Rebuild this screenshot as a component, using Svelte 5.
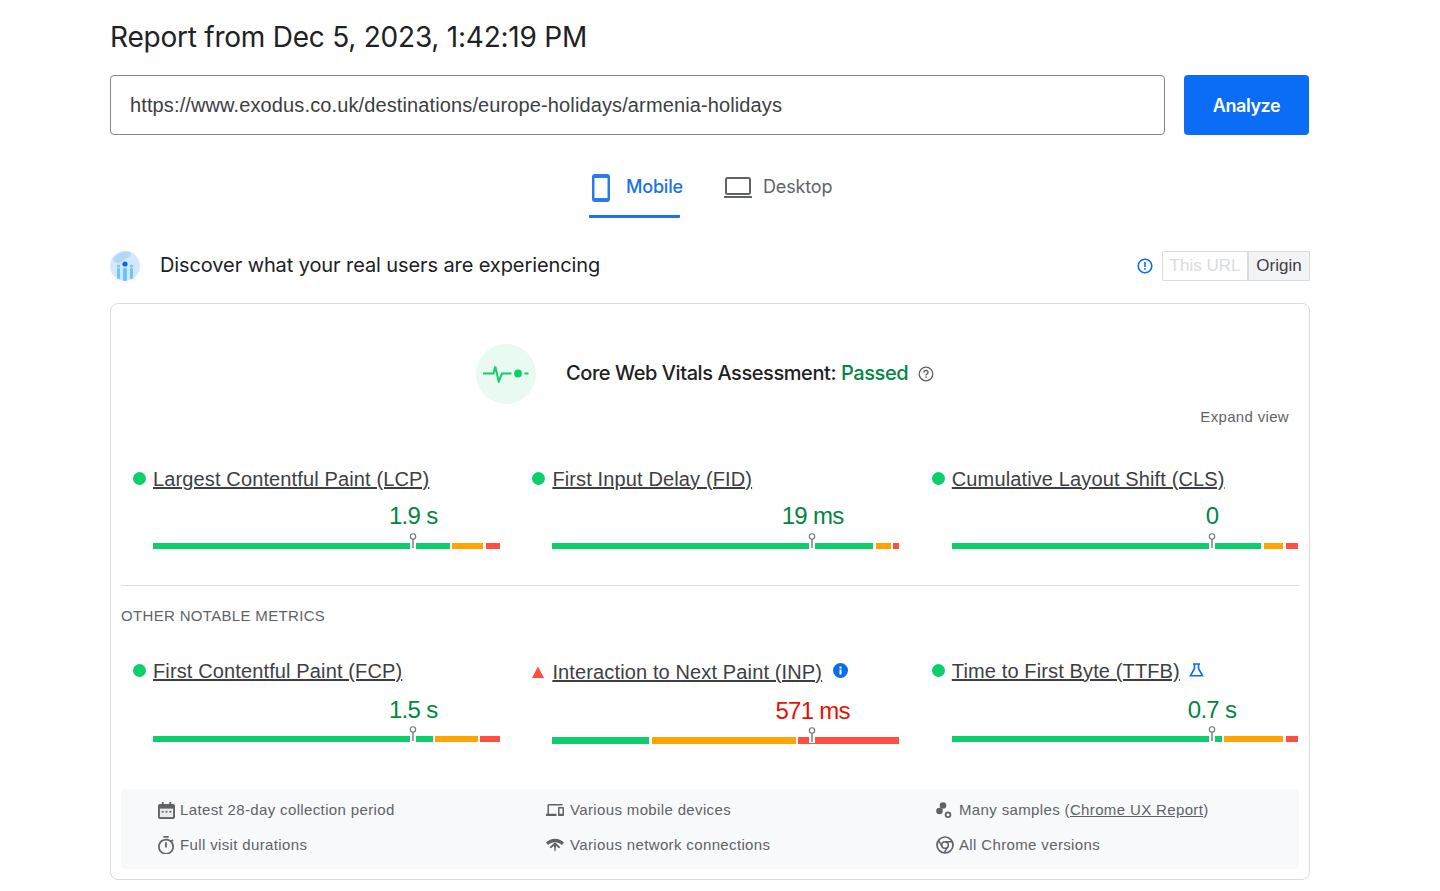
<script>
  const first = [
    { kind: 'good', name: 'Largest Contentful Paint (LCP)', value: '1.9 s', segs: [297, 31, 14], gaps: [2, 3] },
    { kind: 'good', name: 'First Input Delay (FID)', value: '19 ms', segs: [321, 15, 6], gaps: [3, 2] },
    { kind: 'good', name: 'Cumulative Layout Shift (CLS)', value: '0', segs: [309, 19, 12], gaps: [3, 3] }
  ];
  const second = [
    { kind: 'good', name: 'First Contentful Paint (FCP)', value: '1.5 s', segs: [280, 43, 20], gaps: [2, 2] },
    { kind: 'bad', name: 'Interaction to Next Paint (INP)', value: '571 ms', segs: [97, 144, 101], gaps: [3, 2], badge: 'info' },
    { kind: 'good', name: 'Time to First Byte (TTFB)', value: '0.7 s', segs: [270, 59, 12], gaps: [2, 3], badge: 'flask' }
  ];
  const colors = ['green', 'amber', 'red'];
</script>

{#snippet metric(m)}
  <div class="metric" class:bad={m.kind === 'bad'}>
    <div class="metric-title">
      {#if m.kind === 'good'}
        <span class="dot"></span>
      {:else}
        <svg class="tri" viewBox="0 0 12 12" width="12" height="12"><path d="M6 0.5 12 12H0Z" fill="#ff4e42" /></svg>
      {/if}
      <a href="#top">{m.name}</a>
      {#if m.badge === 'info'}
        <svg class="badge" viewBox="0 0 15 15" width="15" height="15"><circle cx="7.5" cy="7.5" r="7.5" fill="#0b6cf0" /><rect x="6.5" y="6.5" width="2" height="5" fill="#fff" /><rect x="6.5" y="3.5" width="2" height="2" fill="#fff" /></svg>
      {:else if m.badge === 'flask'}
        <svg class="badge flask" viewBox="0 0 15 14" width="15" height="14"><path d="M4 1h7M5.500 1v4.500L1.500 12.800h12L9.500 5.500V1" fill="none" stroke="#0b6cf0" stroke-width="1.600" /></svg>
      {/if}
    </div>
    <div class="value-line"><span class="value" style="left:75%">{m.value}</span></div>
    <div class="bar">
      <i class={colors[0]} style="width:{m.segs[0]}px"></i>
      <i class={colors[1]} style="width:{m.segs[1]}px;margin-left:{m.gaps[0]}px"></i>
      <i class={colors[2]} style="width:{m.segs[2]}px;margin-left:{m.gaps[1]}px"></i>
      <svg class="marker" style="left:74.85%" viewBox="0 0 8 16" width="8" height="16"><rect x="1" y="7" width="6" height="9" fill="#fff" /><rect x="3" y="6" width="2" height="9" fill="#9aa0a6" /><circle cx="4" cy="3.500" r="2.700" fill="#fff" stroke="#70757a" stroke-width="1.100" /></svg>
    </div>
  </div>
{/snippet}

<main class="page" id="top">
  <h1>Report from Dec 5, 2023, 1:42:19 PM</h1>

  <div class="search">
    <div class="input">https://www.exodus.co.uk/destinations/europe-holidays/armenia-holidays</div>
    <button class="analyze">Analyze</button>
  </div>

  <div class="tabs">
    <div class="tab active">
      <svg viewBox="0 0 18 28" width="18" height="28"><rect x="0" y="0" width="18" height="28" rx="3" fill="#2a7de9" /><rect x="2.500" y="4" width="13" height="20" fill="#fff" /></svg>
      <span>Mobile</span>
    </div>
    <div class="tab">
      <svg viewBox="0 0 28 22" width="28" height="22"><rect x="2" y="1" width="24" height="16" rx="1.500" fill="none" stroke="#5f6368" stroke-width="2" /><rect x="0" y="19" width="28" height="2" fill="#5f6368" /></svg>
      <span>Desktop</span>
    </div>
  </div>

  <div class="field-head">
    <svg class="crux" viewBox="0 0 30 30" width="30" height="30">
      <circle cx="15" cy="15" r="15" fill="#d2e8fc" />
      <path d="M3 8C7 2 14-1 20 1c2 3 0 5-3 6-4 1-5 5-9 5-2 0-4-1-5-4Z" fill="#b4d6f7" />
      <rect x="7" y="17" width="3" height="11" rx="1" fill="#6fc4fb" />
      <rect x="13" y="17" width="4" height="13" rx="1" fill="#6fc4fb" />
      <rect x="20" y="17" width="3" height="11" rx="1" fill="#6fc4fb" />
      <circle cx="15" cy="13" r="2.600" fill="#0b6cf0" />
      <circle cx="8.500" cy="15" r="1.600" fill="#6fc4fb" />
      <circle cx="21.500" cy="15" r="1.600" fill="#6fc4fb" />
    </svg>
    <h2>Discover what your real users are experiencing</h2>
    <svg class="alert" viewBox="0 0 16 16" width="16" height="16"><circle cx="8" cy="8" r="6.800" fill="none" stroke="#0b6cf0" stroke-width="1.600" /><rect x="7.200" y="4" width="1.600" height="5" fill="#0b6cf0" /><rect x="7.200" y="10.200" width="1.600" height="1.700" fill="#0b6cf0" /></svg>
    <div class="toggle">
      <span class="off">This URL</span>
      <span class="on">Origin</span>
    </div>
  </div>

  <section class="card">
    <div class="assessment">
      <div class="pulse">
        <svg viewBox="0 0 46 18" width="46" height="18">
          <path d="M0 8.500h10.500l1.800-7 3.400 15 3.300-8h9.500" fill="none" stroke="#0cce6b" stroke-width="2" />
          <circle cx="35" cy="8.500" r="3.900" fill="#0cce6b" />
          <rect x="41.500" y="7.500" width="4" height="2" fill="#0cce6b" />
        </svg>
      </div>
      <h3>Core Web Vitals Assessment: <span class="passed">Passed</span></h3>
      <svg class="help" viewBox="0 0 16 16" width="16" height="16"><circle cx="8" cy="8" r="6.800" fill="none" stroke="#5f6368" stroke-width="1.300" /><path d="M5.900 6.500C5.900 5.300 6.800 4.500 8 4.500s2.100.8 2.100 1.900c0 1.500-2.100 1.500-2.100 3.100" fill="none" stroke="#5f6368" stroke-width="1.300" /><rect x="7.300" y="10.400" width="1.400" height="1.400" fill="#5f6368" /></svg>
    </div>

    <div class="expand">Expand view</div>

    <div class="metrics first">
      {#each first as m}{@render metric(m)}{/each}
    </div>

    <hr />
    <div class="notable">OTHER NOTABLE METRICS</div>

    <div class="metrics second">
      {#each second as m}{@render metric(m)}{/each}
    </div>

    <div class="facts">
      <div class="fact cal">
        <svg viewBox="0 0 18 18" width="17" height="17"><path d="M4 0h2v2h6V0h2v2h2a2 2 0 0 1 2 2v12a2 2 0 0 1-2 2H2a2 2 0 0 1-2-2V4a2 2 0 0 1 2-2h2Z" fill="#5f6368" /><rect x="2" y="7" width="14" height="9" fill="#e8eaed" /><rect x="4" y="9.500" width="2" height="1.700" fill="#5f6368" /><rect x="8" y="9.500" width="2" height="1.700" fill="#5f6368" /><rect x="12" y="9.500" width="2" height="1.700" fill="#5f6368" /></svg>
        <span>Latest 28-day collection period</span>
      </div>
      <div class="fact devices">
        <svg viewBox="0 4 24 16" width="18" height="12"><path fill="#5f6368" d="M4 6h18V4H4c-1.100 0-2 .9-2 2v11H0v3h14v-3H4V6zm19 2h-6c-.55 0-1 .45-1 1v10c0 .55.45 1 1 1h6c.55 0 1-.45 1-1V9c0-.55-.45-1-1-1zm-1 9h-4v-7h4v7z" /></svg>
        <span>Various mobile devices</span>
      </div>
      <div class="fact third">
        <svg viewBox="0 0 16 16" width="16" height="16"><circle cx="7" cy="3.500" r="3.300" fill="#5f6368" /><circle cx="3.500" cy="9" r="3.300" fill="#5f6368" /><circle cx="12" cy="12.700" r="2.400" fill="none" stroke="#5f6368" stroke-width="1.800" /></svg>
        <span>Many samples (<a href="#top">Chrome UX Report</a>)</span>
      </div>
      <div class="fact">
        <svg viewBox="3 1 18 21" width="16" height="18.700"><path fill="#5f6368" d="M15 1H9v2h6V1zm-4 13h2V8h-2v6zm8.030-6.610l1.420-1.420c-.43-.51-.9-.99-1.410-1.410l-1.420 1.420C16.070 4.740 14.120 4 12 4c-4.970 0-9 4.030-9 9s4.020 9 9 9 9-4.030 9-9c0-2.120-.74-4.070-1.970-5.610zM12 20c-3.870 0-7-3.130-7-7s3.130-7 7-7 7 3.130 7 7-3.130 7-7 7z" /></svg>
        <span>Full visit durations</span>
      </div>
      <div class="fact devices">
        <svg viewBox="0 2 20 15" width="18" height="14"><path d="M0 7C5 1 15 1 20 7l-2.500 2.500C13.500 5.500 6.500 5.500 2.500 9.500Z" fill="#5f6368" /><path d="M4 12l5.300-5h1.400L16 12l-1.800 1-3-2.600-.7 6.100h-1l-.7-6.100-3 2.600Z" fill="#5f6368" /></svg>
        <span>Various network connections</span>
      </div>
      <div class="fact third chrome">
        <svg viewBox="0 0 18 18" width="18" height="18"><circle cx="9" cy="9" r="8" fill="none" stroke="#5f6368" stroke-width="1.700" /><circle cx="9" cy="9" r="3.300" fill="none" stroke="#5f6368" stroke-width="1.500" /><path d="M9 5.700h7.500M6.200 10.700 2.500 4.400M11.900 10.600 8 16.800" fill="none" stroke="#5f6368" stroke-width="1.500" /></svg>
        <span>All Chrome versions</span>
      </div>
    </div>
  </section>
</main>

<style>
  :global(body) { margin: 0; background: #fff; }
  .page {
    width: 1200px;
    margin-left: 110px;
    font-family: "Liberation Sans", Arial, sans-serif;
    color: #202124;
  }
  h1, h2, h3, .analyze, .tab span {
    font-family: Inter, "Noto Sans", sans-serif;
  }
  h1 {
    margin: 0;
    padding-top: 19px;
    height: 75px;
    box-sizing: border-box;
    font-size: 28px;
    line-height: 36px;
    font-weight: 400;
    letter-spacing: -0.23px;
    white-space: nowrap;
  }
  .search { display: flex; gap: 19px; height: 60px; }
  .input {
    width: 1055px;
    box-sizing: border-box;
    border: 1px solid #80868b;
    border-radius: 4px;
    padding-left: 19px;
    font-size: 20px;
    line-height: 58px;
    letter-spacing: 0.12px;
    color: #3c4043;
  }
  .analyze {
    width: 125px;
    border: 0;
    border-radius: 4px;
    background: #0b6cf5;
    color: #fff;
    font-size: 18px;
    font-weight: 600;
    letter-spacing: -0.4px;
  }
  .tabs { display: flex; justify-content: center; gap: 44px; height: 53px; margin-top: 30px; }
  .tab {
    box-sizing: border-box;
    width: 107px;
    height: 53px;
    display: flex;
    align-items: flex-start;
    gap: 11px;
    color: #5f6368;
    white-space: nowrap;
  }
  .tab svg { margin-top: 12px; flex: none; }
  .tab span { font-size: 18px; line-height: 44px; letter-spacing: -0.15px; }
  .tab.active {
    width: 91px;
    padding-left: 3px;
    gap: 16px;
    color: #1a73e8;
    border-bottom: 3px solid #1a73e8;
    border-radius: 0 0 1px 1px;
  }
  .tab.active span { font-weight: 500; letter-spacing: -0.2px; }
  .tab.active svg { margin-top: 9px; }
  .field-head { display: flex; align-items: center; height: 30px; margin-top: 33px; }
  .crux { margin-right: 20px; flex: none; }
  h2 { margin: -2px 0 0; font-size: 20px; font-weight: 400; line-height: 28px; letter-spacing: -0.1px; flex: 1; white-space: nowrap; }
  .alert { margin-right: 9px; }
  .toggle { display: flex; font-size: 17px; line-height: 28px; gap: 0; }
  .toggle span { box-sizing: border-box; height: 30px; border: 1px solid #dadce0; text-align: center; }
  .off { width: 86px; color: #dadce0; border-radius: 2px 0 0 2px; }
  .on { width: 62px; color: #3c4043; background: #f1f3f4; }
  .card {
    box-sizing: border-box;
    height: 577px;
    margin-top: 22px;
    padding: 0 10px;
    border: 1px solid #dadce0;
    border-radius: 8px;
  }
  .assessment { display: flex; align-items: center; padding-top: 40px; margin-left: 355px; }
  .pulse {
    width: 60px;
    height: 60px;
    flex: none;
    margin-right: 30px;
    border-radius: 50%;
    background: #e9faf1;
    display: flex;
    align-items: center;
    justify-content: center;
  }
  h3 { margin: -2px 10px 0 0; font-size: 20px; line-height: 28px; font-weight: 500; letter-spacing: -0.43px; white-space: nowrap; }
  .passed { color: #018642; }
  .expand { margin-top: 3px; padding-right: 10px; text-align: right; font-size: 15px; line-height: 20px; letter-spacing: 0.33px; color: #5f6368; }
  .metrics { display: grid; grid-template-columns: repeat(3, 347px); column-gap: 52.4px; padding-left: 32px; }
  .first { margin-top: 40px; }
  .second { margin-top: 33px; }
  .metric-title { display: flex; align-items: center; height: 24px; margin-left: -20px; font-size: 20px; letter-spacing: 0.13px; white-space: nowrap; }
  .metric-title a { color: #3c4043; line-height: 24px; }
  .dot { width: 13px; height: 13px; margin-right: 7px; border-radius: 50%; background: #0cce6b; margin-top: -2px; flex: none; }
  .tri { margin-right: 8px; flex: none; }
  .badge { margin-left: 11px; margin-top: -3px; }
  .flask { margin-left: 9px; }
  .value-line { position: relative; height: 30px; margin-top: 10px; }
  .second .value-line { margin-top: 12px; }
  .value { position: absolute; transform: translateX(-50%); font-size: 24px; line-height: 30px; letter-spacing: -0.7px; color: #018642; white-space: nowrap; }
  .bad .value { color: #eb0f00; }
  .bar { position: relative; display: flex; height: 6px; margin-top: 12px; }
  .second .bar { margin-top: 11px; }
  .bad { padding-top: 1px; }
  .bad .bar { height: 7px; }
  .bar i { display: block; height: 100%; }
  .green { background: #0cce6b; }
  .amber { background: #ffa400; }
  .red { background: #ff4e42; }
  .marker { position: absolute; top: -10px; transform: translateX(-50%); }
  hr { height: 1px; border: 0; margin: 36px 0 0; background: #dadce0; }
  .notable { margin-top: 20px; font-size: 15px; line-height: 20px; letter-spacing: 0.33px; color: #5f6368; }
  .facts {
    box-sizing: border-box;
    height: 80px;
    margin-top: 45px;
    padding: 11px 0 0 37px;
    background: #f8f9fa;
    border-radius: 4px;
    display: grid;
    grid-template-columns: 388px 390px 1fr;
    grid-auto-rows: 20px;
    row-gap: 15px;
  }
  .fact { display: flex; align-items: center; font-size: 15px; line-height: 20px; color: #5f6368; letter-spacing: 0.36px; white-space: nowrap; }
  .fact svg { flex: none; margin-right: 6px; }
  .fact a { color: #5f6368; }
  .fact.cal svg { margin-right: 5px; }
  .fact.third svg { margin-right: 7px; }
  .fact.chrome svg { margin-right: 5px; }
</style>
